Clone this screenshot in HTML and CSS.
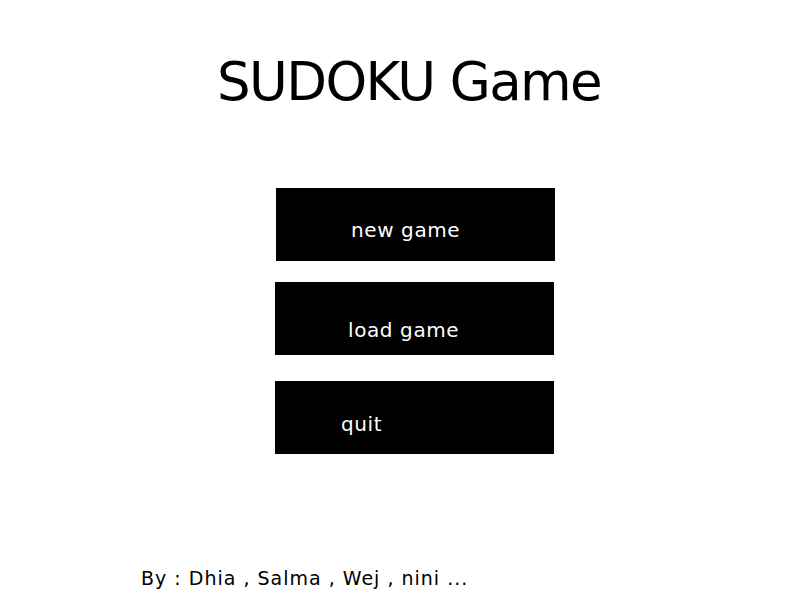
FILE: index.html
```html
<!DOCTYPE html>
<html>
<head>
<meta charset="utf-8">
<link rel="stylesheet" href="styles.css">
</head>
<body>
<div class="screen">
  <h1 class="title">SUDOKU Game</h1>
  <div class="menu">
    <div class="btn btn-new"><span>new game</span></div>
    <div class="btn btn-load"><span>load game</span></div>
    <div class="btn btn-quit"><span>quit</span></div>
  </div>
  <p class="credits">By : Dhia , Salma , Wej , nini ...</p>
</div>
</body>
</html>
```
FILE: styles.css
```css
html, body {
  margin: 0;
  padding: 0;
  background: #ffffff;
}
.screen {
  width: 800px;
  height: 600px;
  font-family: "DejaVu Sans", sans-serif;
  color: #000;
  display: flex;
  flex-direction: column;
  overflow: hidden;
}
.title {
  margin: 52px 0 0 217px;
  font-size: 53px;
  font-weight: normal;
  letter-spacing: -1.6px;
  line-height: 60px;
  height: 60px;
}
.menu {
  display: flex;
  flex-direction: column;
  margin-top: 76px;
}
.btn {
  width: 279px;
  height: 73px;
  background: #000;
  color: #fff;
  font-size: 20px;
  line-height: 24px;
  letter-spacing: 0.6px;
  box-sizing: border-box;
}
.btn-new {
  margin-left: 276px;
  padding: 30px 0 0 75px;
}
.btn-load {
  margin: 21px 0 0 275px;
  padding: 36px 0 0 73px;
}
.btn-quit {
  margin: 26px 0 0 275px;
  padding: 31px 0 0 66px;
}
.credits {
  margin: 112px 0 0 141px;
  font-size: 19px;
  line-height: 24px;
  letter-spacing: 1px;
}
```
